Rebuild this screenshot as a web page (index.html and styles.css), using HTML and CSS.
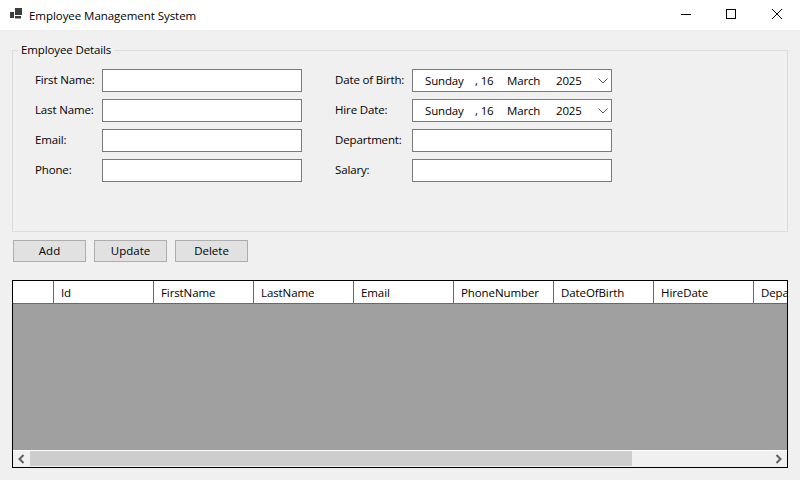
FILE: index.html
```html
<!DOCTYPE html>
<html>
    <head>
        <title>Employee Management System</title>
        <link rel="stylesheet" href="styles.css">
    </head>
    <body>
        <div class="titlebar">
            <svg class="app-icon" width="16" height="16" viewBox="0 0 16 16">
                <rect x="2" y="5" width="4" height="6" fill="#3c3c3c"/>
                <rect x="7" y="1" width="7" height="7" fill="#3c3c3c"/>
                <rect x="7" y="9" width="6" height="2.5" fill="#3c3c3c"/>
            </svg>
            <span class="title">Employee Management System</span>
            <div class="window-buttons">
                <svg class="win-btn" width="46" height="30" viewBox="0 0 46 30">
                    <path d="M19 14.5H29" stroke="#000" fill="none"/>
                </svg>
                <svg class="win-btn" width="46" height="30" viewBox="0 0 46 30">
                    <rect x="18.5" y="9.5" width="9" height="9" stroke="#000" fill="none"/>
                </svg>
                <svg class="win-btn" width="46" height="30" viewBox="0 0 46 30">
                    <path d="M18 9L28 19M28 9L18 19" stroke="#000" fill="none"/>
                </svg>
            </div>
        </div>
        <div class="content">
            <fieldset class="details">
                <legend>Employee Details</legend>
                <div class="form">
                    <div class="form-col">
                        <div class="row">
                            <label class="left-label">First Name:</label>
                            <input class="field" type="text">
                        </div>
                        <div class="row">
                            <label class="left-label">Last Name:</label>
                            <input class="field" type="text">
                        </div>
                        <div class="row">
                            <label class="left-label">Email:</label>
                            <input class="field" type="text">
                        </div>
                        <div class="row">
                            <label class="left-label">Phone:</label>
                            <input class="field" type="text">
                        </div>
                    </div>
                    <div class="form-col">
                        <div class="row">
                            <label class="right-label">Date of Birth:</label>
                            <div class="field date">
                                <span class="d-day">Sunday</span>
                                <span class="d-num">, 16</span>
                                <span class="d-month">March</span>
                                <span>2025</span>
                                <svg class="chevron" width="10" height="6" viewBox="0 0 10 6">
                                    <path d="M0.5 0.5L5 5L9.5 0.5" stroke="#555" fill="none"/>
                                </svg>
                            </div>
                        </div>
                        <div class="row">
                            <label class="right-label">Hire Date:</label>
                            <div class="field date">
                                <span class="d-day">Sunday</span>
                                <span class="d-num">, 16</span>
                                <span class="d-month">March</span>
                                <span>2025</span>
                                <svg class="chevron" width="10" height="6" viewBox="0 0 10 6">
                                    <path d="M0.5 0.5L5 5L9.5 0.5" stroke="#555" fill="none"/>
                                </svg>
                            </div>
                        </div>
                        <div class="row">
                            <label class="right-label">Department:</label>
                            <input class="field" type="text">
                        </div>
                        <div class="row">
                            <label class="right-label">Salary:</label>
                            <input class="field" type="text">
                        </div>
                    </div>
                </div>
            </fieldset>
            <div class="buttons">
                <button class="btn">Add</button>
                <button class="btn">Update</button>
                <button class="btn">Delete</button>
            </div>
            <div class="grid">
                <div class="grid-head">
                    <div class="corner"></div>
                    <div class="col">Id</div>
                    <div class="col">FirstName</div>
                    <div class="col">LastName</div>
                    <div class="col">Email</div>
                    <div class="col">PhoneNumber</div>
                    <div class="col">DateOfBirth</div>
                    <div class="col">HireDate</div>
                    <div class="col">Department</div>
                </div>
                <div class="grid-body"></div>
                <div class="scrollbar">
                    <svg class="arrow" width="17" height="16" viewBox="0 0 17 16">
                        <path d="M10.5 4L6.5 8L10.5 12" stroke="#606060" stroke-width="2" fill="none"/>
                    </svg>
                    <div class="track"><div class="thumb"></div></div>
                    <svg class="arrow" width="17" height="16" viewBox="0 0 17 16">
                        <path d="M6.5 4L10.5 8L6.5 12" stroke="#606060" stroke-width="2" fill="none"/>
                    </svg>
                </div>
            </div>
        </div>
    </body>
</html>
```

FILE: styles.css
```css
html, body {
    margin: 0;
    height: 100%;
}
body {
    width: 800px;
    height: 480px;
    overflow: hidden;
    background: #f0f0f0;
    color: #000;
    font-family: "Open Sans", "Noto Sans", Arial, sans-serif;
    font-size: 11.5px;
}
.titlebar {
    display: flex;
    align-items: center;
    height: 30px;
    background: #fff;
}
.app-icon {
    margin-left: 8px;
    margin-right: 5px;
}
.title {
    flex: 1;
    letter-spacing: -0.05px;
}
.window-buttons {
    display: flex;
}
.win-btn {
    display: block;
}
.content {
    padding: 13px 12px 0 12px;
}
.details {
    box-sizing: border-box;
    height: 189px;
    margin: 0;
    padding: 0;
    border: 1px solid #dcdcdc;
}
.details legend {
    margin-left: 5px;
    padding: 0 3px;
    line-height: 14px;
    letter-spacing: -0.12px;
}
.form {
    display: flex;
    gap: 33px;
    padding: 12px 0 0 22px;
}
.form-col {
    display: flex;
    flex-direction: column;
    gap: 7px;
}
.row {
    display: flex;
    align-items: center;
}
.left-label, .right-label {
    padding-bottom: 2px;
    letter-spacing: -0.15px;
}
.left-label {
    width: 67px;
}
.right-label {
    width: 77px;
}
.field {
    box-sizing: border-box;
    width: 200px;
    height: 23px;
    margin: 0;
    padding: 0;
    background: #fff;
    border: 1px solid #7a7a7a;
    font: inherit;
}
.date {
    display: flex;
    align-items: center;
    padding-left: 12px;
    letter-spacing: -0.15px;
}
.d-day {
    width: 50px;
}
.d-num {
    width: 32px;
}
.d-month {
    width: 49px;
}
.chevron {
    margin-left: auto;
    margin-right: 3px;
}
.buttons {
    display: flex;
    gap: 8px;
    margin: 8px 0 18px 1px;
}
.btn {
    box-sizing: border-box;
    width: 73px;
    height: 22px;
    padding: 0 0 1px 0;
    background: #e1e1e1;
    border: 1px solid #adadad;
    border-radius: 0;
    color: #000;
    font: inherit;
}
.grid {
    box-sizing: border-box;
    height: 188px;
    border: 1px solid #000;
    display: flex;
    flex-direction: column;
    overflow: hidden;
}
.grid-head {
    display: flex;
    flex: none;
    height: 23px;
    background: #fff;
    border-bottom: 1px solid #696969;
    box-sizing: border-box;
    overflow: hidden;
}
.corner {
    flex: none;
    width: 41px;
    box-sizing: border-box;
    border-right: 1px solid #696969;
}
.col {
    flex: none;
    width: 100px;
    box-sizing: border-box;
    padding: 1px 0 0 7px;
    line-height: 22px;
    letter-spacing: -0.1px;
    border-right: 1px solid #696969;
    white-space: nowrap;
}
.grid-body {
    flex: 1;
    background: #a0a0a0;
}
.scrollbar {
    display: flex;
    flex: none;
    height: 17px;
    box-sizing: border-box;
    border-top: 1px solid #fff;
    background: #f0f0f0;
}
.arrow {
    flex: none;
}
.track {
    flex: 1;
}
.thumb {
    width: 602px;
    height: 15px;
    background: #cdcdcd;
}
```
